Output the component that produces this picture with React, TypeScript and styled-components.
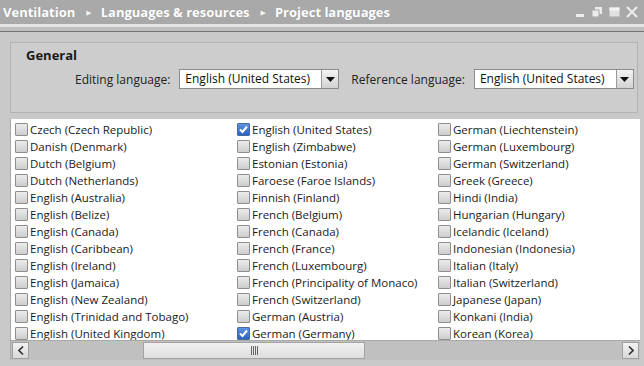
import React from "react";
import styled, { createGlobalStyle } from "styled-components";

const Global = createGlobalStyle`
  html, body { margin: 0; padding: 0; width: 644px; height: 366px; overflow: hidden; background: #c9c9c9; }
  * { box-sizing: border-box; }
  body { font-family: "Open Sans", "DejaVu Sans", sans-serif; }
`;

const Frame = styled.div`
  width: 644px;
  height: 366px;
  display: flex;
  flex-direction: column;
  background: #c9c9c9;
  overflow: hidden;
`;

const TitleBar = styled.div`
  height: 24px;
  flex: none;
  background: #a9a9a9;
  display: flex;
  align-items: center;
  padding: 0 6px 0 3px;
  color: #ffffff;
  font-weight: 700;
  font-size: 13px;
  text-shadow: 0 0 1px rgba(0,0,0,0.15);
`;

const Crumb = styled.span`
  white-space: nowrap;
`;

const Sep = styled.span`
  font-size: 7px;
  margin: 0 9px 0 11px;
  color: #f2f2f2;
`;

const WinIcons = styled.div`
  margin-left: auto;
  display: flex;
  align-items: center;
  gap: 6px;
`;

const Strip = styled.div`
  flex: none;
  height: 8px;
  background: linear-gradient(#e4e4e4 0, #e4e4e4 3px, #bfbfbf 3px, #bfbfbf 7px, #737373 7px, #737373 8px);
`;

const Body = styled.div`
  flex: 1;
  display: flex;
  flex-direction: column;
  padding: 10px 6px 0 10px;
  gap: 6px;
  min-height: 0;
`;

const Group = styled.div`
  height: 71px;
  flex: none;
  border: 1px solid #b3b3b3;
  background: #cdcdcd;
  padding: 5px 0 0 15px;
`;

const GroupTitle = styled.div`
  font-weight: 700;
  font-size: 13px;
  color: #1a1a1a;
  line-height: 14px;
`;

const FieldRow = styled.div`
  display: flex;
  align-items: center;
  margin-top: 7px;
  padding-left: 49px;
`;

const Label = styled.span<{ $ml?: number }>`
  font-size: 12px;
  color: #222;
  margin-left: ${p => p.$ml ?? 0}px;
  margin-right: 9px;
  white-space: nowrap;
`;

const Select = styled.div`
  display: flex;
  height: 20px;
  width: 160px;
  border: 1px solid #8c8c8c;
  background: #ffffff;
`;

const SelectText = styled.div`
  flex: 1;
  font-size: 12px;
  color: #111;
  padding-left: 5px;
  line-height: 17px;
  white-space: nowrap;
  overflow: hidden;
`;

const SelectBtn = styled.div`
  width: 17px;
  border-left: 1px solid #9a9a9a;
  background: linear-gradient(#f4f4f4, #d2d2d2);
  display: flex;
  align-items: center;
  justify-content: center;
`;

const ListWrap = styled.div`
  height: 241px;
  flex: none;
  display: flex;
  flex-direction: column;
  border-left: 1px solid #a8a8a8;
  width: 630px;
`;

const List = styled.div`
  height: 221px;
  flex: none;
  background: #ffffff;
  overflow: hidden;
  display: grid;
  grid-template-rows: repeat(13, 17px);
  grid-auto-flow: column;
  grid-template-columns: 222px 201px 1fr;
  padding: 2px 0 0 4px;
`;

const Item = styled.div`
  display: flex;
  align-items: center;
  gap: 2px;
  font-size: 11.5px;
  color: #1a1a1a;
  white-space: nowrap;
`;

const Box = styled.span<{ $checked?: boolean }>`
  width: 13px;
  height: 13px;
  flex: none;
  border: 1px solid ${p => (p.$checked ? "#4a6a9a" : "#8e8e8e")};
  border-radius: 1px;
  background: ${p =>
    p.$checked
      ? "linear-gradient(#5d93e0, #2a62c0)"
      : "linear-gradient(#ececec, #cdcdcd)"};
  display: flex;
  align-items: center;
  justify-content: center;
`;

const HScroll = styled.div`
  height: 20px;
  flex: none;
  display: flex;
  background: #c0c0c0;
  border-top: 1px solid #a9a9a9;
  padding: 1px;
  align-items: stretch;
`;

const ScrollBtn = styled.div`
  width: 17px;
  background: linear-gradient(#f2f2f2, #d9d9d9);
  border: 1px solid #a0a0a0;
  display: flex;
  align-items: center;
  justify-content: center;
`;

const Track = styled.div`
  flex: 1;
  position: relative;
`;

const Thumb = styled.div`
  position: absolute;
  top: 0;
  bottom: 0;
  left: 114px;
  width: 222px;
  background: linear-gradient(#f1f1f1, #dedede);
  border: 1px solid #a3a3a3;
  display: flex;
  align-items: center;
  justify-content: center;
`;

const col1 = [
  "Czech (Czech Republic)",
  "Danish (Denmark)",
  "Dutch (Belgium)",
  "Dutch (Netherlands)",
  "English (Australia)",
  "English (Belize)",
  "English (Canada)",
  "English (Caribbean)",
  "English (Ireland)",
  "English (Jamaica)",
  "English (New Zealand)",
  "English (Trinidad and Tobago)",
  "English (United Kingdom)",
];
const col2 = [
  "English (United States)",
  "English (Zimbabwe)",
  "Estonian (Estonia)",
  "Faroese (Faroe Islands)",
  "Finnish (Finland)",
  "French (Belgium)",
  "French (Canada)",
  "French (France)",
  "French (Luxembourg)",
  "French (Principality of Monaco)",
  "French (Switzerland)",
  "German (Austria)",
  "German (Germany)",
];
const col3 = [
  "German (Liechtenstein)",
  "German (Luxembourg)",
  "German (Switzerland)",
  "Greek (Greece)",
  "Hindi (India)",
  "Hungarian (Hungary)",
  "Icelandic (Iceland)",
  "Indonesian (Indonesia)",
  "Italian (Italy)",
  "Italian (Switzerland)",
  "Japanese (Japan)",
  "Konkani (India)",
  "Korean (Korea)",
];
const checked = new Set(["English (United States)", "German (Germany)"]);

const Check = () => (
  <svg width="11" height="11" viewBox="0 0 11 11">
    <path d="M2 5.5 L4.5 8 L9 2.5" fill="none" stroke="#fff" strokeWidth="2" />
  </svg>
);

const Arrow = () => (
  <svg width="9" height="5" viewBox="0 0 9 5">
    <path d="M0 0 H9 L4.5 5 Z" fill="#111" />
  </svg>
);

const Grip = () => (
  <svg width="7" height="9" viewBox="0 0 7 9">
    <path d="M0.5 0 V9 M2.5 0 V9 M4.5 0 V9 M6.5 0 V9" stroke="#666" strokeWidth="1" />
  </svg>
);

const WinIconSet = () => (
  <WinIcons>
    <svg width="10" height="12" viewBox="0 0 10 12">
      <rect x="1" y="8" width="8" height="3" fill="#ececec" />
    </svg>
    <svg width="12" height="12" viewBox="0 0 12 12">
      <rect x="4" y="1" width="7" height="7" fill="#ececec" />
      <rect x="1" y="4" width="7" height="7" fill="#ececec" stroke="#a9a9a9" strokeWidth="1" />
    </svg>
    <svg width="11" height="12" viewBox="0 0 11 12">
      <rect x="0.5" y="1.5" width="10" height="9" fill="#e2e2e2" />
      <rect x="0.5" y="1.5" width="10" height="3" fill="#f4f4f4" />
    </svg>
    <svg width="12" height="12" viewBox="0 0 12 12">
      <path d="M1 1 L11 11 M11 1 L1 11" stroke="#ececec" strokeWidth="2" />
    </svg>
  </WinIcons>
);

export default function App() {
  const all = [...col1, ...col2, ...col3];
  return (
    <Frame>
      <Global />
      <TitleBar>
        <Crumb>Ventilation</Crumb>
        <Sep>▶</Sep>
        <Crumb>Languages &amp; resources</Crumb>
        <Sep>▶</Sep>
        <Crumb>Project languages</Crumb>
        <WinIconSet />
      </TitleBar>
      <Strip />
      <Body>
        <Group>
          <GroupTitle>General</GroupTitle>
          <FieldRow>
            <Label>Editing language:</Label>
            <Select>
              <SelectText>English (United States)</SelectText>
              <SelectBtn><Arrow /></SelectBtn>
            </Select>
            <Label $ml={12}>Reference language:</Label>
            <Select>
              <SelectText>English (United States)</SelectText>
              <SelectBtn><Arrow /></SelectBtn>
            </Select>
          </FieldRow>
        </Group>
        <ListWrap>
          <List>
            {all.map(t => (
              <Item key={t}>
                <Box $checked={checked.has(t)}>{checked.has(t) && <Check />}</Box>
                {t}
              </Item>
            ))}
          </List>
          <HScroll>
            <ScrollBtn>
              <svg width="6" height="9" viewBox="0 0 6 9"><path d="M5 0.5 L1 4.5 L5 8.5" fill="none" stroke="#333" strokeWidth="1.6" /></svg>
            </ScrollBtn>
            <Track>
              <Thumb><Grip /></Thumb>
            </Track>
            <ScrollBtn>
              <svg width="6" height="9" viewBox="0 0 6 9"><path d="M1 0.5 L5 4.5 L1 8.5" fill="none" stroke="#333" strokeWidth="1.6" /></svg>
            </ScrollBtn>
          </HScroll>
        </ListWrap>
      </Body>
    </Frame>
  );
}
